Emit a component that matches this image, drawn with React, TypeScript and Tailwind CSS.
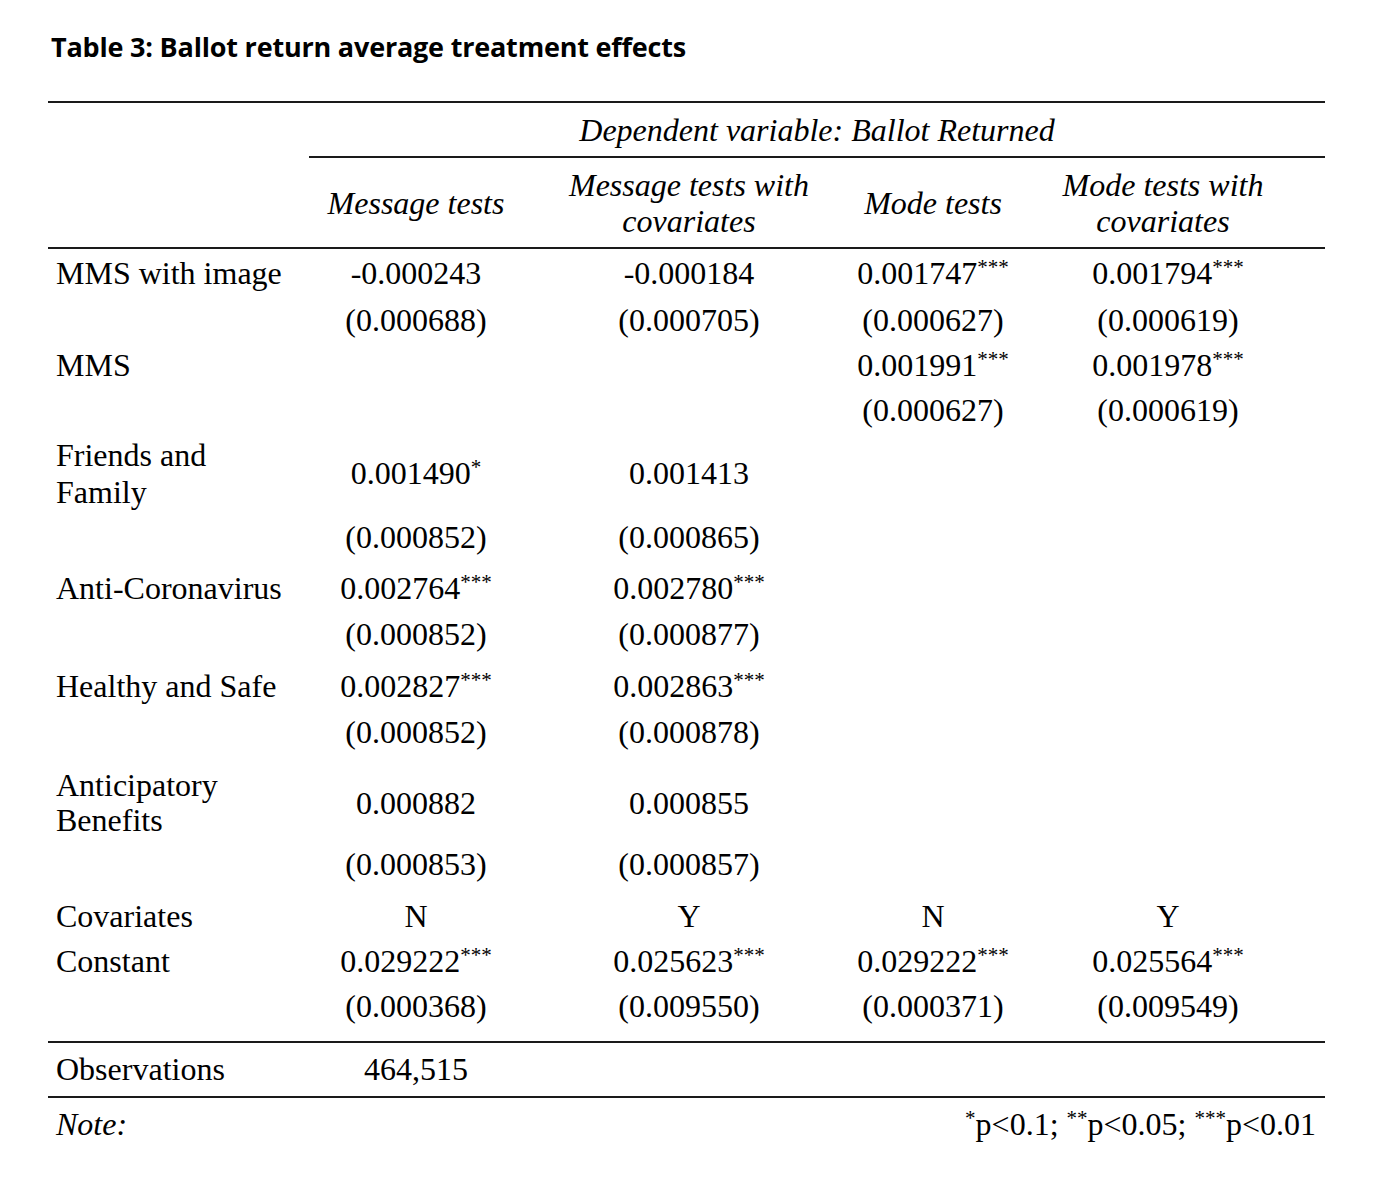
import React from 'react';

const grid = 'grid grid-cols-[261px_214px_332px_156px_314px] items-center';

const Num = ({ v, s }: { v: string; s?: string }) => (
  <span>
    {v}
    {s && <span className="relative -top-[10px] text-[21px] leading-none">{s}</span>}
  </span>
);

type Cell = { v: string; s?: string } | null;

const Row = ({
  label,
  cells,
  h,
  extra = '',
}: {
  label?: React.ReactNode;
  cells: Cell[];
  h: string;
  extra?: string;
}) => (
  <div className={`${grid} ${h} ${extra}`}>
    <div className="pl-[8px] leading-[37px]">{label}</div>
    {cells.map((c, i) => (
      <div key={i} className="text-center leading-[37px]">
        {c && <Num v={c.v} s={c.s} />}
      </div>
    ))}
    {Array.from({ length: 4 - cells.length }).map((_, i) => (
      <div key={'e' + i} />
    ))}
  </div>
);

export default function App() {
  return (
    <div className="w-[1386px] min-h-[1196px] bg-white text-black">
      <div className="h-[101px] pl-[51px] pt-[31px] leading-[32px] text-[27px] font-bold font-['Open_Sans',sans-serif] tracking-[-0.2px]">
        Table 3: Ballot return average treatment effects
      </div>

      <div className="ml-[48px] w-[1277px] font-['Liberation_Serif',serif] text-[32px]">
        <div className="border-t-2 border-[#1a1a1a]" />
        <div className="h-[53px] flex items-center">
          <div className="w-[261px]" />
          <div className="flex-1 text-center italic">Dependent variable: Ballot Returned</div>
        </div>
        <div className="ml-[261px] border-t-2 border-[#1a1a1a]" />
        <div className={`${grid} h-[89px] italic`}>
          <div />
          <div className="text-center leading-[36px]">Message tests</div>
          <div className="text-center leading-[36px]">
            Message tests with
            <br />
            covariates
          </div>
          <div className="text-center leading-[36px]">Mode tests</div>
          <div className="text-center leading-[36px] pr-[10px]">
            Mode tests with
            <br />
            covariates
          </div>
        </div>
        <div className="border-t-2 border-[#1a1a1a]" />

        <Row
          label="MMS with image"
          h="h-[48px]"
          cells={[
            { v: '-0.000243' },
            { v: '-0.000184' },
            { v: '0.001747', s: '***' },
            { v: '0.001794', s: '***' },
          ]}
        />
        <Row
          h="h-[46px]"
          cells={[{ v: '(0.000688)' }, { v: '(0.000705)' }, { v: '(0.000627)' }, { v: '(0.000619)' }]}
        />
        <Row label="MMS" h="h-[44px]" cells={[null, null, { v: '0.001991', s: '***' }, { v: '0.001978', s: '***' }]} />
        <Row h="h-[46px]" cells={[null, null, { v: '(0.000627)' }, { v: '(0.000619)' }]} />
        <Row
          label={
            <>
              Friends and
              <br />
              Family
            </>
          }
          h="h-[81px]"
          cells={[{ v: '0.001490', s: '*' }, { v: '0.001413' }]}
        />
        <Row h="h-[46px]" cells={[{ v: '(0.000852)' }, { v: '(0.000865)' }]} />
        <Row
          label="Anti-Coronavirus"
          h="h-[46px]"
          extra="mt-[5px]"
          cells={[{ v: '0.002764', s: '***' }, { v: '0.002780', s: '***' }]}
        />
        <Row h="h-[46px]" cells={[{ v: '(0.000852)' }, { v: '(0.000877)' }]} />
        <Row
          label="Healthy and Safe"
          h="h-[46px]"
          extra="mt-[6px]"
          cells={[{ v: '0.002827', s: '***' }, { v: '0.002863', s: '***' }]}
        />
        <Row h="h-[46px]" cells={[{ v: '(0.000852)' }, { v: '(0.000878)' }]} />
        <Row
          label={
            <div className="leading-[35px]">
              Anticipatory
              <br />
              Benefits
            </div>
          }
          h="h-[86px]"
          extra="pt-[12px] pb-[2px]"
          cells={[{ v: '0.000882' }, { v: '0.000855' }]}
        />
        <Row h="h-[46px]" cells={[{ v: '(0.000853)' }, { v: '(0.000857)' }]} />
        <Row
          label="Covariates"
          h="h-[46px]"
          extra="mt-[6px]"
          cells={[{ v: 'N' }, { v: 'Y' }, { v: 'N' }, { v: 'Y' }]}
        />
        <Row
          label="Constant"
          h="h-[44px]"
          cells={[
            { v: '0.029222', s: '***' },
            { v: '0.025623', s: '***' },
            { v: '0.029222', s: '***' },
            { v: '0.025564', s: '***' },
          ]}
        />
        <Row
          h="h-[46px]"
          cells={[{ v: '(0.000368)' }, { v: '(0.009550)' }, { v: '(0.000371)' }, { v: '(0.009549)' }]}
        />
        <div className="mt-[12px] border-t-2 border-[#1a1a1a]" />
        <Row label="Observations" h="h-[53px]" cells={[{ v: '464,515' }]} />
        <div className="border-t-2 border-[#1a1a1a]" />
        <div className="h-[52px] flex items-center justify-between pl-[8px] pr-[9px]">
          <span className="italic">Note:</span>
          <span>
            <Num v="" s="*" />
            p&lt;0.1; <Num v="" s="**" />
            p&lt;0.05; <Num v="" s="***" />
            p&lt;0.01
          </span>
        </div>
      </div>
    </div>
  );
}
